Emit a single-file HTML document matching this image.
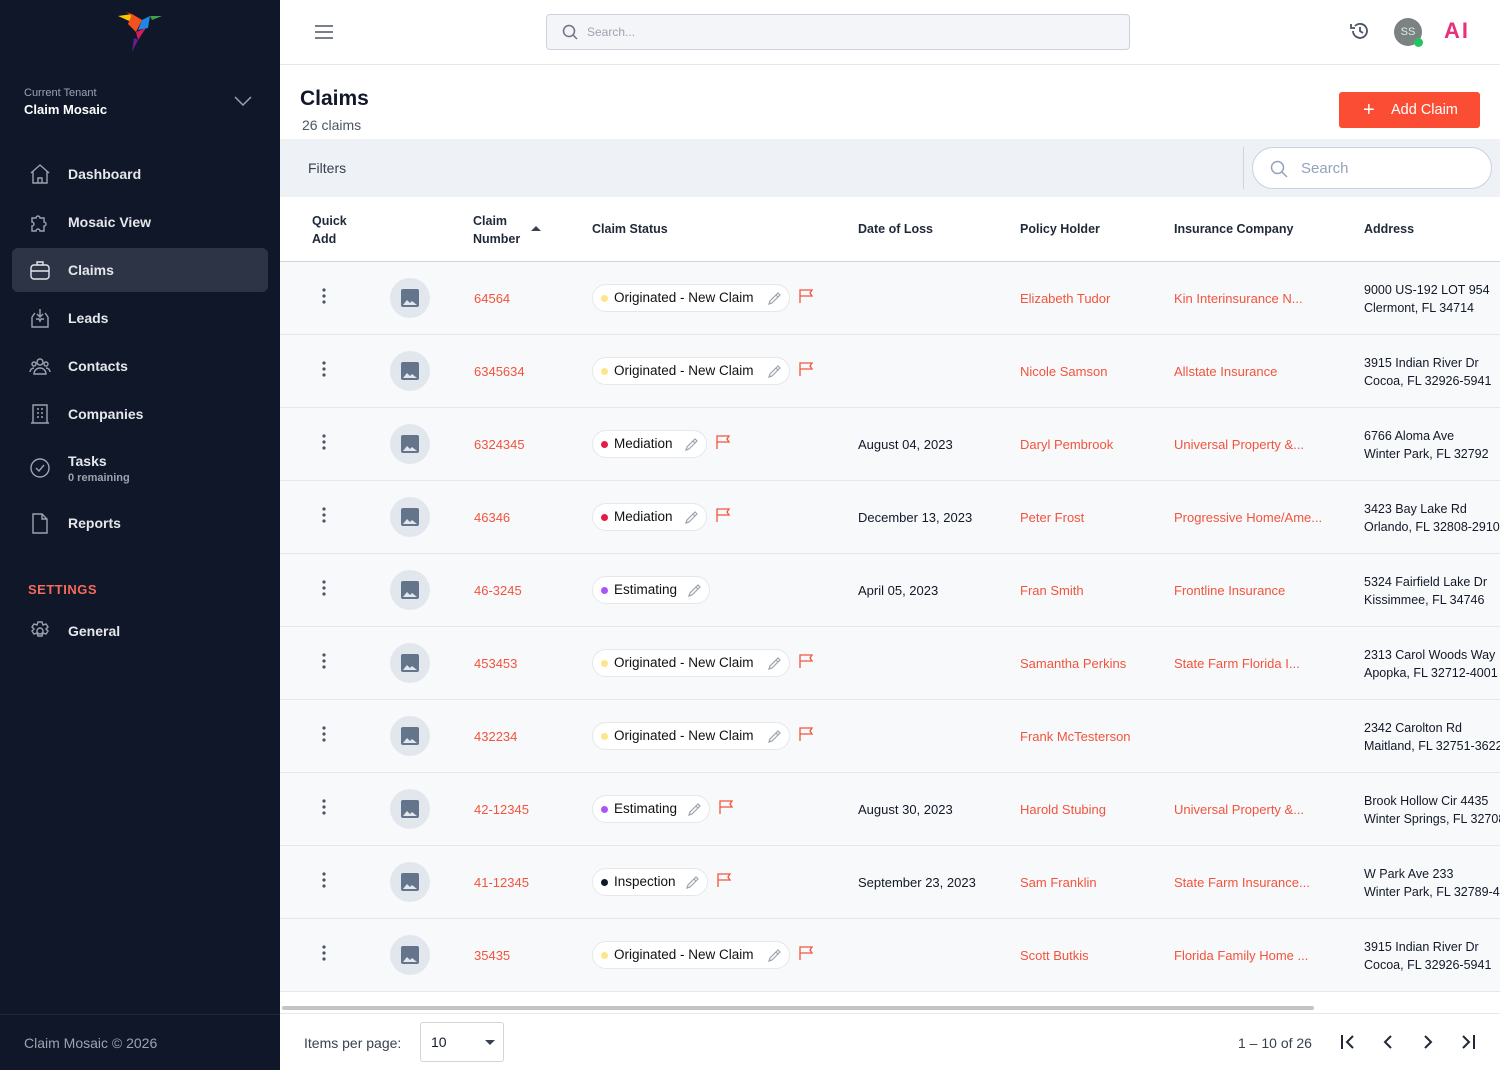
<!DOCTYPE html>
<html><head><meta charset="utf-8"><style>
*{box-sizing:border-box;margin:0;padding:0}
body{width:1500px;height:1070px;overflow:hidden;font-family:"Liberation Sans",sans-serif;background:#fff;position:relative;color:#111827}
.sb{position:absolute;left:0;top:0;width:280px;height:1070px;background:#0f1729}
.nav{position:absolute;left:12px;width:256px;height:44px;border-radius:6px;color:#e5e7eb;font-size:14px;font-weight:bold}
.nav span{position:absolute;left:56px;top:14px}
.nav svg{position:absolute;left:17px;top:11px}
.act{background:#2d3446}
.abs{position:absolute}
.row{position:absolute;left:280px;width:1220px;height:73px;background:#f8f9fb;border-bottom:1px solid #e5e7eb;font-size:13px}
.row>*{position:absolute}
.dots{left:42px;top:26px;width:4px}
.img{left:110px;top:16px;width:40px;height:40px;border-radius:50%;background:#e2e7ee}
.img i{position:absolute;left:11px;top:11px;width:18px;height:18px;background:#64748b;border-radius:2px}
.num{left:194px;top:29px;color:#f2543d}
.pill{left:312px;top:22px;height:28px;border:1px solid #e5e7eb;border-radius:14px;background:#fff;padding:0 28px 0 21px;line-height:26px;font-size:13.5px;color:#111}
.pill b{position:absolute;left:8px;top:10px;width:7px;height:7px;border-radius:50%}
.pill svg{position:absolute;right:8px;top:7px}
.flag{top:26px}
.date{left:578px;top:29px}
.hold{left:740px;top:29px;color:#f2543d}
.ins{left:894px;top:29px;color:#f2543d}
.addr{left:1084px;top:19px;line-height:18px;white-space:nowrap;font-size:12.5px}
</style></head><body>
<div class="sb">
<svg class="abs" style="left:116px;top:10px" width="48" height="44" viewBox="0 0 48 44"><polygon points="2,6 16,4 20,14" fill="#f7c600"/><polygon points="10,2 22,10 16,4" fill="#e53935"/><polygon points="16,4 26,10 20,22 12,14" fill="#f4511e"/><polygon points="26,10 34,6 32,18 22,20" fill="#1e88e5"/><polygon points="34,6 46,6 36,10" fill="#43a047"/><polygon points="20,22 30,18 22,30" fill="#d81b60"/><polygon points="22,30 16,42 18,28" fill="#6a1b9a"/></svg>
<div class="abs" style="left:24px;top:87px;font-size:11px;color:#9ca3af">Current Tenant</div>
<div class="abs" style="left:24px;top:102px;font-size:13px;font-weight:bold;color:#fff">Claim Mosaic</div>
<svg class="abs" style="left:234px;top:95px" width="18" height="12"><path d="M1 2l8 8 8-8" stroke="#9ca3af" stroke-width="1.5" fill="none"/></svg>
<div class="nav" style="top:152px"><svg width="22" height="22" viewBox="0 0 22 22" fill="none" stroke="#9ca3af" stroke-width="1.4"><path d="M2 10L11 2l9 8M4 8v12h14V8M9 20v-5h4v5"/></svg><span>Dashboard</span></div>
<div class="nav" style="top:200px"><svg width="22" height="22" viewBox="0 0 22 22" fill="none" stroke="#9ca3af" stroke-width="1.4"><path d="M3 7h4a2 2 0 1 1 4 0h4v4a2 2 0 1 1 0 4v5H11a2 2 0 1 0-4 0H3v-5a2 2 0 1 0 0-4z"/></svg><span>Mosaic View</span></div>
<div class="nav act" style="top:248px"><svg width="22" height="22" viewBox="0 0 22 22" fill="none" stroke="#e5e7eb" stroke-width="1.4"><rect x="2" y="6" width="18" height="14" rx="3"/><path d="M8 6V3h6v3M2 12h18"/></svg><span>Claims</span></div>
<div class="nav" style="top:296px"><svg width="22" height="22" viewBox="0 0 22 22" fill="none" stroke="#9ca3af" stroke-width="1.4"><path d="M3 10v10h16V10M3 10l3-4M19 10l-3-4M7 12h3l1 2 1-2h3M11 2v8M8 7l3 3 3-3"/></svg><span>Leads</span></div>
<div class="nav" style="top:344px"><svg width="22" height="22" viewBox="0 0 22 22" fill="none" stroke="#9ca3af" stroke-width="1.4"><circle cx="11" cy="7" r="3"/><circle cx="5" cy="9" r="2"/><circle cx="17" cy="9" r="2"/><path d="M5 19a6 6 0 0 1 12 0zM1 17a4 4 0 0 1 4-4M21 17a4 4 0 0 0-4-4"/></svg><span>Contacts</span></div>
<div class="nav" style="top:392px"><svg width="22" height="22" viewBox="0 0 22 22" fill="none" stroke="#9ca3af" stroke-width="1.4"><path d="M4 20V2h14v18M2 20h18M8 6h2M12 6h2M8 10h2M12 10h2M8 14h2M12 14h2"/></svg><span>Companies</span></div>
<div class="nav" style="top:446px"><svg width="22" height="22" viewBox="0 0 22 22" fill="none" stroke="#9ca3af" stroke-width="1.4"><circle cx="11" cy="11" r="9"/><path d="M7 11l3 3 5-6"/></svg><span style="top:7px">Tasks</span><span style="top:26px;font-size:11px;color:#9ca3af">0 remaining</span></div>
<div class="nav" style="top:501px"><svg width="22" height="22" viewBox="0 0 22 22" fill="none" stroke="#9ca3af" stroke-width="1.4"><path d="M4 2h9l5 5v14H4zM13 2v5h5"/></svg><span>Reports</span></div>
<div class="abs" style="left:28px;top:582px;font-size:13px;font-weight:bold;color:#f26b5b;letter-spacing:.5px">SETTINGS</div>
<div class="nav" style="top:609px"><svg width="22" height="22" viewBox="0 0 22 22" fill="none" stroke="#9ca3af" stroke-width="1.4"><circle cx="11" cy="11" r="3"/><path d="M9 2h4l1 3 3-1 2 3-2 2 2 2-2 3-3-1-1 3H9l-1-3-3 1-2-3 2-2-2-2 2-3 3 1z"/></svg><span>General</span></div>
<div class="abs" style="left:0;top:1014px;width:280px;border-top:1px solid #1f2937"></div>
<div class="abs" style="left:24px;top:1035px;font-size:14px;color:#9ca3af">Claim Mosaic © 2026</div>
</div>
<!-- topbar -->
<div class="abs" style="left:280px;top:0;width:1220px;height:65px;border-bottom:1px solid #e5e7eb;background:#fff"></div>
<svg class="abs" style="left:315px;top:25px" width="18" height="14"><path d="M0 1h18M0 7h18M0 13h18" stroke="#4b5563" stroke-width="1.6"/></svg>
<div class="abs" style="left:546px;top:14px;width:584px;height:36px;border:1px solid #cbd2dc;border-radius:4px;background:#f3f5f8"></div>
<svg class="abs" style="left:562px;top:24px" width="16" height="16" fill="none" stroke="#6b7280" stroke-width="1.5"><circle cx="7" cy="7" r="5.5"/><path d="M11 11l4 4"/></svg>
<div class="abs" style="left:587px;top:25px;font-size:12px;color:#9ca3af">Search...</div>
<svg class="abs" style="left:1349px;top:20px" width="22" height="22" fill="none" stroke="#4b5563" stroke-width="1.8"><path d="M4 11a7 7 0 1 0 2-5M2 4v4h4M11 7v4l3 2"/></svg>
<div class="abs" style="left:1394px;top:18px;width:28px;height:28px;border-radius:50%;background:#7a8282;color:#e5e7eb;font-size:11px;text-align:center;line-height:28px">SS</div>
<div class="abs" style="left:1414px;top:38px;width:9px;height:9px;border-radius:50%;background:#22c55e"></div>
<div class="abs" style="left:1444px;top:18px;font-size:22px;font-weight:bold;color:#e9307a;letter-spacing:2px">AI</div>
<div class="abs" style="left:300px;top:87px;font-size:21px;font-weight:bold">Claims</div>
<div class="abs" style="left:302px;top:117px;font-size:14px;color:#4b5563">26 claims</div>
<div class="abs" style="left:1339px;top:92px;width:141px;height:36px;background:#fb4d33;border-radius:3px;color:#fff;font-size:14.5px;line-height:36px"><span style="position:absolute;left:24px;font-size:20px">+</span><span style="position:absolute;left:52px">Add Claim</span></div>
<div class="abs" style="left:280px;top:139px;width:1220px;height:58px;background:#eef1f6"></div>
<div class="abs" style="left:308px;top:160px;font-size:14px;color:#374151">Filters</div>
<div class="abs" style="left:1243px;top:147px;height:42px;border-left:1px solid #d1d5db"></div>
<div class="abs" style="left:1252px;top:147px;width:240px;height:42px;border:1px solid #cbd2dc;border-radius:21px;background:#fff"></div>
<svg class="abs" style="left:1270px;top:160px" width="18" height="18" fill="none" stroke="#94a3b8" stroke-width="1.5"><circle cx="7.5" cy="7.5" r="6"/><path d="M12 12l5 5"/></svg>
<div class="abs" style="left:1301px;top:160px;font-size:15px;color:#94a3b8">Search</div>
<!-- header -->
<div class="abs" style="left:280px;top:197px;width:1220px;height:65px;border-bottom:1px solid #d1d5db;font-size:12.5px;font-weight:bold;color:#1f2937">
<div class="abs" style="left:32px;top:15px;line-height:18px">Quick<br>Add</div>
<div class="abs" style="left:193px;top:15px;line-height:18px">Claim<br>Number</div>
<svg class="abs" style="left:251px;top:28px" width="10" height="6"><path d="M0 6l5-5 5 5z" fill="#374151"/></svg>
<div class="abs" style="left:312px;top:25px">Claim Status</div>
<div class="abs" style="left:578px;top:25px">Date of Loss</div>
<div class="abs" style="left:740px;top:25px">Policy Holder</div>
<div class="abs" style="left:894px;top:25px">Insurance Company</div>
<div class="abs" style="left:1084px;top:25px">Address</div>
</div>
<div id="rows"></div>
<div class="abs" style="left:282px;top:1006px;width:1032px;height:4px;background:#c4c4c4;border-radius:2px"></div>
<div class="abs" style="left:280px;top:1013px;width:1220px;border-top:1px solid #e5e7eb"></div>
<div class="abs" style="left:304px;top:1035px;font-size:14px;color:#374151">Items per page:</div>
<div class="abs" style="left:420px;top:1022px;width:84px;height:40px;border:1px solid #d1d5db;border-radius:3px;font-size:14px;line-height:38px;padding-left:10px">10<svg class="abs" style="left:64px;top:17px" width="10" height="5"><path d="M0 0h10L5 5z" fill="#374151"/></svg></div>
<div class="abs" style="left:1238px;top:1035px;font-size:14px;color:#374151">1 – 10 of 26</div>
<svg class="abs" style="left:1338px;top:1034px" width="140" height="16" fill="none" stroke="#1f2937" stroke-width="2"><path d="M4 1v14M15 2l-6 6 6 6M53 2l-6 6 6 6M87 2l6 6-6 6M125 2l6 6-6 6M136 1v14"/></svg>
<script>
const R=[["64564","Originated - New Claim","#fde68a",1,"","Elizabeth Tudor","Kin Interinsurance N...","9000 US-192 LOT 954","Clermont, FL 34714"],
["6345634","Originated - New Claim","#fde68a",1,"","Nicole Samson","Allstate Insurance","3915 Indian River Dr","Cocoa, FL 32926-5941"],
["6324345","Mediation","#e11d48",1,"August 04, 2023","Daryl Pembrook","Universal Property &...","6766 Aloma Ave","Winter Park, FL 32792"],
["46346","Mediation","#e11d48",1,"December 13, 2023","Peter Frost","Progressive Home/Ame...","3423 Bay Lake Rd","Orlando, FL 32808-2910"],
["46-3245","Estimating","#a855f7",0,"April 05, 2023","Fran Smith","Frontline Insurance","5324 Fairfield Lake Dr","Kissimmee, FL 34746"],
["453453","Originated - New Claim","#fde68a",1,"","Samantha Perkins","State Farm Florida I...","2313 Carol Woods Way","Apopka, FL 32712-4001"],
["432234","Originated - New Claim","#fde68a",1,"","Frank McTesterson","","2342 Carolton Rd","Maitland, FL 32751-3622"],
["42-12345","Estimating","#a855f7",1,"August 30, 2023","Harold Stubing","Universal Property &...","Brook Hollow Cir 4435","Winter Springs, FL 32708"],
["41-12345","Inspection","#111827",1,"September 23, 2023","Sam Franklin","State Farm Insurance...","W Park Ave 233","Winter Park, FL 32789-4"],
["35435","Originated - New Claim","#fde68a",1,"","Scott Butkis","Florida Family Home ...","3915 Indian River Dr","Cocoa, FL 32926-5941"]];
const w={"Originated - New Claim":198,"Mediation":115,"Estimating":118,"Inspection":116};
let h="";R.forEach((r,i)=>{const W=w[r[1]];h+=`<div class="row" style="top:${262+i*73}px">
<svg class="dots" height="16" width="4" viewBox="0 0 4 16"><circle cx="2" cy="2" r="1.6" fill="#4b5563"/><circle cx="2" cy="8" r="1.6" fill="#4b5563"/><circle cx="2" cy="14" r="1.6" fill="#4b5563"/></svg>
<div class="img"><i></i><svg style="position:absolute;left:13px;top:19px" width="14" height="8"><path d="M0 8l4-5 3 3 2-2 5 4z" fill="#e2e7ee"/></svg></div>
<div class="num">${r[0]}</div>
<div class="pill" style="width:${W}px"><b style="background:${r[2]}"></b>${r[1]}<svg width="14" height="14" fill="none" stroke="#9ca3af" stroke-width="1.2"><path d="M2 12l1-3 8-8 2 2-8 8zM9 3l2 2"/></svg></div>
${r[3]?`<svg class="flag" style="left:${312+W+8}px" width="16" height="16" fill="none" stroke="#f2543d" stroke-width="1.3"><path d="M2 15V2h12l-2 3 2 3H2"/></svg>`:""}
<div class="date">${r[4]}</div><div class="hold">${r[5]}</div><div class="ins">${r[6]}</div>
<div class="addr">${r[7]}<br>${r[8]}</div></div>`});
document.getElementById("rows").innerHTML=h;
</script>
</body></html>
